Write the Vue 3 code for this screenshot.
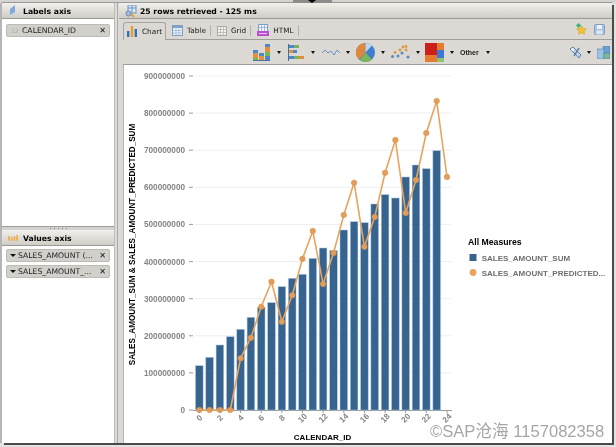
<script setup>
const Y0 = 410
const PER = 37.11
const X0 = 199.3
const DX = 10.32
const barTops = [365.7, 357.3, 345, 336.7, 329.3, 317.3, 307.3, 302.7, 286.7, 278.3, 274.3, 258.4, 248, 250.7, 230, 221.7, 222.7, 204, 194.7, 198, 177, 165, 168.7, 150.7]
const lineYs = [410, 410, 410, 410, 358.3, 337.7, 306.7, 281.7, 321.7, 295.3, 258.7, 231, 284, 253, 215, 182.7, 246.7, 217, 172.7, 140, 213, 180, 133, 101, 177]
const px = (i) => +(X0 + DX * i).toFixed(1)
const bars = barTops.map((top, i) => ({ x: +(px(i) - 3.8).toFixed(1), y: top, h: +(Y0 - top).toFixed(1) }))
const dots = lineYs.map((y, i) => ({ x: px(i), y }))
const linePoints = dots.map((d) => `${d.x},${d.y}`).join(' ')
const yTicks = Array.from({ length: 10 }, (_, k) => ({
  label: k === 0 ? '0' : `${k}00000000`,
  y: +(Y0 - PER * k).toFixed(1),
}))
const xTicks = Array.from({ length: 13 }, (_, k) => ({ label: String(k * 2), x: px(k * 2) }))
const valueChips = ['SALES_AMOUNT (...', 'SALES_AMOUNT_...']
</script>

<template>
  <div class="screen">
    <div class="top-strip"><span class="handle"><i class="handle-arrow"></i></span></div>
    <div class="window">
      <aside class="left">
        <section class="axis axis-labels">
          <header class="panel-head">
            <svg class="head-icon" width="10" height="12" viewBox="0 0 10 12"><path d="M2 10 L2 4 L7 0 L7 7 Z" fill="#7fa8dc"/><path d="M2 10 L7 7 L7 9 L3 11 Z" fill="#c4d6ee"/></svg>
            <span>Labels axis</span>
          </header>
          <div class="chips">
            <div class="chip">
              <span class="chip-num">12</span>
              <span class="chip-text">CALENDAR_ID</span>
              <span class="chip-x">✕</span>
            </div>
          </div>
        </section>
        <div class="sash"><i></i><i></i><i></i><i></i><i></i></div>
        <section class="axis axis-values">
          <header class="panel-head">
            <svg class="head-icon" width="10" height="6" viewBox="0 0 11 6"><path d="M0 6V1h2v5zM3 6V2h2v4zM6 6V1h2v5zM9 6V0h2v6z" fill="#eeb04e"/></svg>
            <span>Values axis</span>
          </header>
          <div class="chips">
            <div v-for="c in valueChips" :key="c" class="chip">
              <i class="chip-arrow"></i>
              <span class="chip-text">{{ c }}</span>
              <span class="chip-x">✕</span>
            </div>
          </div>
        </section>
      </aside>

      <div class="splitter"></div>

      <main class="right">
        <header class="panel-head result-head">
          <svg width="12" height="13" viewBox="0 0 12 13"><rect x="3" y="0" width="8" height="8" fill="#dce8f4" stroke="#6f94bd"/><path d="M3 3h8M7 0v8" stroke="#6f94bd"/><circle cx="3.5" cy="8.5" r="2.6" fill="#9db9d8" stroke="#6c8db2"/><path d="M6 9l3 3" stroke="#e0a030" stroke-width="2"/></svg>
          <span>25 rows retrieved - 125 ms</span>
        </header>

        <div class="body">
          <nav class="tabs">
            <div class="tab active">
              <svg width="10" height="11" viewBox="0 0 10 11"><rect x="0" y="5" width="2.4" height="6" fill="#2f6fc0"/><rect x="3.8" y="0" width="2.4" height="11" fill="#e8a020"/><rect x="7.6" y="3" width="2.4" height="8" fill="#2f6fc0"/></svg>
              <span>Chart</span>
            </div>
            <div class="tab">
              <svg width="11" height="11" viewBox="0 0 11 11"><rect x=".5" y=".5" width="10" height="10" fill="#eef4fb" stroke="#7d9fc6"/><rect x="1" y="1" width="9" height="2" fill="#7d9fc6"/><path d="M4 1v9M7 1v9M1 5.5h9M1 8h9" stroke="#9db7d6" stroke-width=".8"/></svg>
              <span>Table</span>
              <i class="tab-sep"></i>
            </div>
            <div class="tab">
              <svg width="10" height="10" viewBox="0 0 10 10"><rect x=".5" y=".5" width="9" height="9" fill="#f2f1ee" stroke="#a9a9a5"/><path d="M3.5 1v8M6.5 1v8M1 3.5h8M1 6.5h8" stroke="#b8b8b4" stroke-width=".8"/></svg>
              <span>Grid</span>
              <i class="tab-sep"></i>
            </div>
            <div class="tab">
              <svg width="12" height="13" viewBox="0 0 12 13"><rect x="1.5" y=".5" width="9" height="8" fill="#eef4fb" stroke="#7d9fc6"/><path d="M4.5 1v7M7.5 1v7M2 3.5h8" stroke="#8fadd0" stroke-width=".8"/><rect x="0" y="7" width="12" height="5" fill="#b84fd0"/><rect x="2" y="9" width="8" height="1" fill="#f0c8f8"/></svg>
              <span>HTML</span>
              <i class="tab-sep"></i>
            </div>
            <div class="tab-tools">
              <svg width="12" height="12" viewBox="0 0 12 12"><path d="M6.5 2.5l1.5 3 3.5.4-2.6 2.3.8 3.3-3.2-1.8-3 1.8.7-3.3L1.5 5.9l3.5-.4z" fill="#f2c230" stroke="#c99a20" stroke-width=".5"/><path d="M3.5 0l2.5 2.5L3.5 5 1 2.5z" fill="#35b574"/></svg>
              <svg width="11" height="11" viewBox="0 0 11 11"><rect x=".5" y=".5" width="10" height="10" rx="1" fill="#a9c3df" stroke="#7f9fc2"/><rect x="3" y="1" width="5" height="4" fill="#eaf1f8"/><rect x="2.5" y="6.5" width="6" height="4" fill="#dfe8f2"/></svg>
            </div>
          </nav>

          <div class="toolbar">
            <div class="tool-group">
              <svg width="17" height="17" viewBox="0 0 17 17"><g v-for="b in [[0,6],[6,9],[12,0]]" :key="b[0]"><rect :x="b[0]" :y="b[1]" width="5" height="17" fill="#4d87c9"/><rect :x="b[0]" :y="b[1] + 3" width="5" height="5" fill="#e0913a"/><rect :x="b[0]" :y="b[1] + 8" width="5" height="4" fill="#75b45c"/></g><rect x="0" y="16" width="17" height="1" fill="#46709e"/></svg>
              <i class="drop d1"></i>
              <svg width="16" height="17" viewBox="0 0 16 17"><rect x="0" y="0" width="1" height="17" fill="#46709e"/><rect x="1" y="1" width="5" height="3" fill="#4d87c9"/><rect x="6" y="1" width="5" height="3" fill="#75b45c"/><rect x="1" y="6" width="4" height="3" fill="#e0913a"/><rect x="5" y="6" width="4" height="3" fill="#4d87c9"/><rect x="1" y="12" width="5" height="3" fill="#4d87c9"/><rect x="6" y="12" width="5" height="3" fill="#75b45c"/><rect x="11" y="12" width="5" height="3" fill="#e0913a"/></svg>
              <i class="drop d2"></i>
              <svg width="18" height="8" viewBox="0 0 18 8"><path d="M0 5L3 2L6 5L9 3L12 7L15 2L18 5" fill="none" stroke="#6a8fd0" stroke-width="1"/></svg>
              <i class="drop d3"></i>
              <svg width="19" height="19" viewBox="0 0 19 19"><circle cx="9.5" cy="9.5" r="9.5" fill="#3f7fd0"/><path d="M9.5 9.5V0A9.5 9.5 0 0 0 .5 6.5z" fill="#e0873a"/><path d="M9.5 9.5L.5 6.5A9.5 9.5 0 0 0 3 16.5z" fill="#e0873a"/><path d="M9.5 9.5L3.5 17A9.5 9.5 0 0 0 16 16.5z" fill="#7ab45c"/><path d="M9.5 9.5V0A9.5 9.5 0 0 1 16 2.5z" fill="#bcd6f2"/></svg>
              <i class="drop d4"></i>
              <svg width="19" height="14" viewBox="0 0 19 14"><g fill="#5b86c4"><circle cx="1.5" cy="11.5" r="1.5"/><circle cx="7" cy="11" r="1.5"/><circle cx="11" cy="8" r="1.5"/><circle cx="17" cy="12" r="1.5"/></g><g fill="#e0973f"><circle cx="4" cy="7.5" r="1.4"/><circle cx="9" cy="5" r="1.4"/><circle cx="12" cy="2" r="1.4"/><circle cx="15" cy="5" r="1.4"/><circle cx="15" cy="1.5" r="1.4"/></g></svg>
              <i class="drop d5"></i>
              <svg width="19" height="19" viewBox="0 0 19 19"><rect width="12" height="12" fill="#cc1f1a"/><rect y="12" width="12" height="7" fill="#e67a2e"/><rect x="12" width="7" height="7" fill="#e67a2e"/><rect x="12" y="7" width="7" height="8" fill="#3d78d8"/><rect x="12" y="15" width="7" height="4" fill="#8fc26a"/></svg>
              <i class="drop d6"></i>
              <span class="other">Other</span>
              <i class="drop d7"></i>
            </div>
            <div class="tool-right">
              <svg width="13" height="13" viewBox="0 0 13 13"><path d="M1 3l3-2 8 8-2 3z" fill="#c4d4e8" stroke="#5d80a8"/><circle cx="3.5" cy="3.5" r="1.2" fill="#fff"/><path d="M5 10l5-8" stroke="#5d80a8" stroke-width="1.5"/></svg>
              <i class="drop d8"></i>
              <svg width="13" height="13" viewBox="0 0 13 13"><rect x="6" y="0" width="7" height="7" fill="#6aa0d4" stroke="#4d7fae" stroke-width=".6"/><rect x="0" y="3" width="7" height="10" fill="#9cc3e4" stroke="#4d7fae" stroke-width=".6"/><rect x="7" y="7" width="6" height="6" fill="#7db98f" stroke="#4d7fae" stroke-width=".6"/></svg>
            </div>
          </div>

          <div class="chart-wrap">
            <svg class="chart" width="489" height="378" viewBox="123 65 489 378">
              <g v-for="t in yTicks" :key="t.y">
                <line v-if="t.label !== '0'" x1="195" x2="451" :y1="t.y" :y2="t.y" class="grid" />
                <line x1="189" x2="193" :y1="t.y" :y2="t.y" class="tick" />
                <text x="185" :y="t.y + 3" text-anchor="end" class="tlabel">{{ t.label }}</text>
              </g>
              <line x1="193" x2="452" y1="410.5" y2="410.5" class="tick" />
              <rect v-for="(b, i) in bars" :key="i" :x="b.x" :y="b.y" width="7.6" :height="b.h" class="bar" />
              <polyline :points="linePoints" class="sline" />
              <circle v-for="(d, i) in dots" :key="'d' + i" :cx="d.x" :cy="d.y" r="2.8" class="dot" />
              <g v-for="t in xTicks" :key="t.x">
                <line :x1="t.x" :x2="t.x" y1="410" y2="413" class="tick" />
                <text :transform="`translate(${t.x + 2},420) rotate(-45)`" text-anchor="middle" class="tlabel">{{ t.label }}</text>
              </g>
              <text transform="translate(135,244.5) rotate(-90)" text-anchor="middle" class="ytitle">SALES_AMOUNT_SUM &amp; SALES_AMOUNT_PREDICTED_SUM</text>
              <text x="322.5" y="440" text-anchor="middle" class="xtitle">CALENDAR_ID</text>
              <text x="468" y="245" class="ltitle">All Measures</text>
              <rect x="469.5" y="254" width="7" height="7" fill="#36648f" />
              <text x="481.7" y="261" class="ltext">SALES_AMOUNT_SUM</text>
              <circle cx="473" cy="272.5" r="3.4" fill="#e8a45e" />
              <text x="481.7" y="276" class="ltext">SALES_AMOUNT_PREDICTED...</text>
            </svg>
          </div>
        </div>
      </main>
    </div>
    <div class="watermark">©SAP沧海 1157082358</div>
  </div>
</template>

<style>
html, body { margin: 0; background: #e4e4e4; overflow: hidden; }
</style>

<style scoped>
.screen {
  position: relative;
  width: 616px;
  height: 447px;
  overflow: hidden;
  background: #e2e2e2;
  font-family: "DejaVu Sans", "Liberation Sans", sans-serif;
  display: flex;
  flex-direction: column;
  filter: blur(0.4px);
}
.top-strip {
  height: 3px;
  flex: none;
  background: #d5d3cf;
  padding-left: 293px;
}
.handle {
  display: block;
  position: relative;
  width: 39px;
  height: 3px;
  background: #8c8c8a;
}
.handle-arrow {
  position: absolute;
  left: 15px;
  top: 0;
  border: 4px solid transparent;
  border-top: 3px solid #000;
  border-bottom: 0;
}
.window {
  display: flex;
  width: 610px;
  height: 440px;
  flex: none;
  background: #c9c7c3;
  margin-left: 2px;
  box-shadow: 2px 2px 0 #4a4a4a, -2px 0 0 #b5b5b5, 0 -1px 0 #999;
}
.left {
  width: 112px;
  flex: none;
  display: flex;
  flex-direction: column;
  background: #fff;
}
.axis { display: flex; flex-direction: column; background: #fff; }
.axis-labels { height: 223px; flex: none; }
.axis-values { flex: 1; }
.sash {
  height: 4px;
  flex: none;
  display: flex;
  justify-content: center;
  align-items: center;
  gap: 3px;
  background: #d4d2ce;
  border-top: 1px solid #9b9b98;
  box-sizing: border-box;
}
.sash i { width: 1px; height: 1px; background: #777; }
.panel-head {
  height: 16px;
  flex: none;
  box-sizing: border-box;
  display: flex;
  align-items: center;
  gap: 5px;
  padding: 1px 0 0 6px;
  background: linear-gradient(#f2f0ec, #d0cdc7);
  border-bottom: 1px solid #9b9a96;
  font-weight: 700;
  font-size: 7.7px;
  color: #000;
}
.chips {
  display: flex;
  flex-direction: column;
  gap: 3px;
  padding: 3px 4px 0;
}
.axis-labels .chips { padding-top: 5px; }
.chip {
  height: 13px;
  box-sizing: border-box;
  display: flex;
  align-items: center;
  padding: 0 3px 0 3px;
  background: #d2d0cb;
  border: 1px solid #bdbbb6;
  border-radius: 2px;
  font-size: 7.7px;
  color: #222;
  white-space: nowrap;
}
.chip-num { font-size: 6px; color: #aaa; width: 11px; flex: none; margin-left: 1px; }
.chip-arrow {
  width: 0;
  height: 0;
  flex: none;
  border: 3.5px solid transparent;
  border-top: 3.5px solid #111;
  border-bottom: 0;
  margin-right: 2px;
}
.chip-text { flex: 1; min-width: 0; overflow: hidden; }
.chip-x { font-size: 8px; color: #111; flex: none; font-weight: 700; }
.splitter {
  width: 5px;
  flex: none;
  background: linear-gradient(90deg, #bdbbb8 0 1px, #dedcd8 1px 3px, #a9a8a5 3px 4px, #dedcd8 4px);
}
.right {
  flex: 1;
  min-width: 0;
  display: flex;
  flex-direction: column;
}
.result-head { gap: 3px; }
.body {
  flex: 1;
  display: flex;
  flex-direction: column;
  min-height: 0;
  background: #dcd9d4;
  padding-left: 4px;
}
.tabs {
  height: 21px;
  flex: none;
  box-sizing: border-box;
  display: flex;
  align-items: flex-end;
  border-bottom: 1px solid #9f9e9a;
  font-size: 7.3px;
  color: #222;
}
.tab {
  position: relative;
  height: 17px;
  box-sizing: border-box;
  display: flex;
  align-items: center;
  gap: 4px;
  padding: 0 0 0 6px;
}
.tab.active {
  width: 43px;
  flex: none;
  gap: 5px;
  padding-left: 3px;
  margin-bottom: -1px;
  height: 18px;
  background: #dcd9d4;
  border: 1px solid #a5a4a0;
  border-bottom: 0;
  border-radius: 3px 3px 0 0;
}
.tab-sep { width: 1px; height: 11px; background: #b3b1ad; }
.tab-tools {
  margin-left: auto;
  align-self: center;
  display: flex;
  align-items: center;
  gap: 7px;
  padding-right: 7px;
}
.toolbar {
  height: 25px;
  flex: none;
  box-sizing: border-box;
  display: flex;
  align-items: center;
  justify-content: space-between;
  padding: 0 2px 0 130px;
  border-bottom: 1px solid #9f9e9a;
}
.tool-group, .tool-right { display: flex; align-items: center; }
.drop {
  width: 0;
  height: 0;
  flex: none;
  border: 2.5px solid transparent;
  border-top: 3px solid #111;
  border-bottom: 0;
}
.d1 { margin: 0 7px 0 7px; }
.d2 { margin: 0 7px 0 7px; }
.d3 { margin: 0 6px 0 6px; }
.d4 { margin: 0 6px 0 6px; }
.d5 { margin: 0 5px 0 6px; }
.d6 { margin: 0 6px 0 6px; }
.d7 { margin: 0 0 0 7px; }
.d8 { margin: 0 6px 0 5px; }
.other { font-size: 7px; font-weight: 700; color: #222; font-family: "Liberation Sans", sans-serif; }
.chart-wrap { flex: 1; min-height: 0; background: #fff; border-left: 1px solid #b9b7b3; box-sizing: border-box; }
.chart {
  display: block;
  margin-left: -1px;
  font-family: "Liberation Sans", sans-serif;
}
.grid { stroke: #eeeeee; stroke-width: 1; }
.tick { stroke: #9a9a9a; stroke-width: 1; }
.tlabel { font-size: 8.2px; font-weight: 700; fill: #858585; }
.bar { fill: #36648f; stroke: #a9c6e4; stroke-width: 0.5; }
.sline { fill: none; stroke: #e8a45e; stroke-width: 1.6; stroke-linejoin: round; }
.dot { fill: #e49c56; stroke: #d8924e; stroke-width: 0.5; }
.ytitle { font-size: 8.13px; font-weight: 700; fill: #000; }
.xtitle { font-size: 8px; font-weight: 700; fill: #000; }
.ltitle { font-size: 8.7px; font-weight: 700; fill: #000; }
.ltext { font-size: 8px; font-weight: 700; fill: #6e6e6e; }
.watermark {
  position: absolute;
  left: 430px;
  top: 422px;
  font-family: "Liberation Sans", "Noto Sans CJK SC", sans-serif;
  font-size: 16.6px;
  line-height: 20px;
  white-space: nowrap;
  color: rgba(110, 110, 110, 0.62);
}
</style>
